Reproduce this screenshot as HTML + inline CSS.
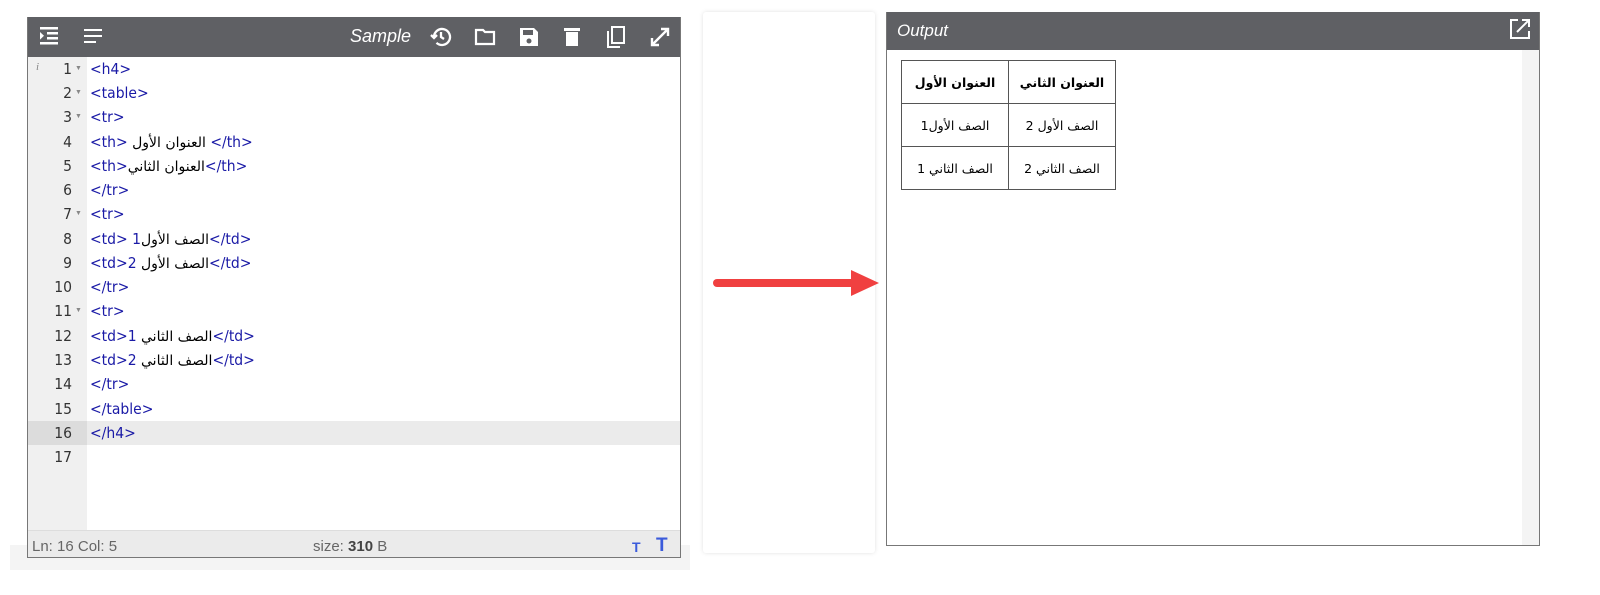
<!DOCTYPE html>
<html><head><meta charset="utf-8"><style>
body{margin:0;width:1600px;height:595px;background:#fff;position:relative;overflow:hidden;font-family:"Liberation Sans","DejaVu Sans",sans-serif}
.ed{position:absolute;left:27px;top:17px;width:652px;height:540px;border:1px solid #777;border-top:none;background:#fff}
.hdr{position:absolute;left:0;top:0;right:0;height:40px;background:#5f6064}
.gut{position:absolute;left:0;top:40px;width:59px;bottom:26px;background:#f0f0f0}
.ln{position:absolute;left:0;width:44px;text-align:right;font-family:"DejaVu Sans Condensed","DejaVu Sans",sans-serif;font-size:15.5px;color:#333;height:24px;line-height:24px}
.cd{position:absolute;left:62px;font-family:"DejaVu Sans Condensed","DejaVu Sans Mono",monospace;font-size:15.5px;color:#1a1aa6;height:24px;line-height:24px;white-space:pre}
.ar{color:#000;font-family:"DejaVu Sans",serif;font-size:14px}
.fold{position:absolute;left:47px;font-size:7px;color:#888}
.stat{position:absolute;left:0;right:0;bottom:0;height:26px;background:#ebebeb;border-top:1px solid #ddd;font-size:15px;color:#666;line-height:32px;overflow:hidden}
.ic{position:absolute;top:8px}
.out{position:absolute;left:886px;top:12px;width:652px;height:533px;border:1px solid #777;border-top:none;background:#fff}
table{position:absolute;left:14px;top:48px;border-collapse:collapse;font-family:"DejaVu Sans",serif;font-size:12.5px}
td,th{border:1px solid #555;height:42px;padding:0 8px;text-align:center;white-space:nowrap;direction:rtl}
th,td{width:90px}
</style></head><body>
<div style="position:absolute;left:10px;top:545px;width:680px;height:25px;background:#f4f4f4"></div>
<div class="ed">
 <div class="hdr">
  <svg class="ic" style="left:10px" width="22" height="22" viewBox="0 0 22 22" fill="#fff"><rect x="2" y="2" width="18" height="2.5"/><rect x="9" y="7" width="11" height="2.5"/><rect x="9" y="12" width="11" height="2.5"/><rect x="2" y="17" width="18" height="2.5"/><path d="M2 7l4 3.8-4 3.8z"/></svg>
  <svg class="ic" style="left:54px" width="22" height="22" viewBox="0 0 22 22" fill="#fff"><rect x="2" y="4" width="18" height="2"/><rect x="2" y="10" width="18" height="2"/><rect x="2" y="16" width="12" height="2"/></svg>
  <div style="position:absolute;left:322px;top:9px;color:#fff;font-style:italic;font-size:18px">Sample</div>
  <svg class="ic" style="left:401px" width="24" height="24" viewBox="0 0 24 24" fill="none" stroke="#fff" stroke-width="2.3"><path d="M5 12a8 8 0 1 1 2.5 5.8"/><path d="M12 7v5l3 2"/><path d="M2 10l3 3 3-3" /></svg>
  <svg class="ic" style="left:445px" width="24" height="24" viewBox="0 0 24 24" fill="none" stroke="#fff" stroke-width="2.2"><path d="M3 5h7l2 2h9v12H3z"/></svg>
  <svg class="ic" style="left:489px" width="24" height="24" viewBox="0 0 24 24" fill="#fff"><path d="M3 3h14l4 4v14H3z"/><rect x="6" y="5" width="10" height="5" fill="#5f6064"/><circle cx="12" cy="16" r="2.5" fill="#5f6064"/></svg>
  <svg class="ic" style="left:532px" width="24" height="24" viewBox="0 0 24 24" fill="#fff"><rect x="4" y="3" width="16" height="3"/><path d="M6 7h12v14H6z"/></svg>
  <svg class="ic" style="left:576px" width="24" height="24" viewBox="0 0 24 24" fill="none" stroke="#fff" stroke-width="2"><rect x="8" y="2" width="12" height="16"/><path d="M4 6v16h12"/></svg>
  <svg class="ic" style="left:620px" width="24" height="24" viewBox="0 0 24 24" fill="none" stroke="#fff" stroke-width="2.4"><path d="M4 20L20 4M13 4h7v7M4 13v7h7"/></svg>
 </div>
 <div class="gut"></div>
 <div style="position:absolute;left:0;right:0;top:404px;height:24px;background:#ebebeb"></div>
 <div style="position:absolute;left:0;top:404px;width:59px;height:24px;background:#dcdcdc"></div>
 <div style="position:absolute;left:8px;top:44px;font-size:11px;color:#888;font-style:italic;font-family:'Liberation Serif',serif">i</div>
 <div class="stat"><span style="position:absolute;left:4px">Ln: 16 Col: 5</span><span style="position:absolute;left:285px">size: <b style="color:#444">310</b> B</span><span style="position:absolute;left:604px;color:#3b5bdb;font-weight:bold;font-size:14px">T</span><span style="position:absolute;left:628px;color:#3b5bdb;font-weight:bold;font-size:19px;line-height:30px">T</span></div>
 <div class="ln" style="top:40px">1</div><div class="fold" style="top:48px">▼</div><div class="cd" style="top:40px">&lt;h4&gt;</div>
 <div class="ln" style="top:64px">2</div><div class="fold" style="top:72px">▼</div><div class="cd" style="top:64px">&lt;table&gt;</div>
 <div class="ln" style="top:88px">3</div><div class="fold" style="top:96px">▼</div><div class="cd" style="top:88px">&lt;tr&gt;</div>
 <div class="ln" style="top:113px">4</div><div class="cd" style="top:113px">&lt;th&gt; <span class="ar">العنوان الأول</span> &lt;/th&gt;</div>
 <div class="ln" style="top:137px">5</div><div class="cd" style="top:137px">&lt;th&gt;<span class="ar">العنوان الثاني</span>&lt;/th&gt;</div>
 <div class="ln" style="top:161px">6</div><div class="cd" style="top:161px">&lt;/tr&gt;</div>
 <div class="ln" style="top:185px">7</div><div class="fold" style="top:193px">▼</div><div class="cd" style="top:185px">&lt;tr&gt;</div>
 <div class="ln" style="top:210px">8</div><div class="cd" style="top:210px">&lt;td&gt; 1<span class="ar">الصف الأول</span>&lt;/td&gt;</div>
 <div class="ln" style="top:234px">9</div><div class="cd" style="top:234px">&lt;td&gt;2 <span class="ar">الصف الأول</span>&lt;/td&gt;</div>
 <div class="ln" style="top:258px">10</div><div class="cd" style="top:258px">&lt;/tr&gt;</div>
 <div class="ln" style="top:282px">11</div><div class="fold" style="top:290px">▼</div><div class="cd" style="top:282px">&lt;tr&gt;</div>
 <div class="ln" style="top:307px">12</div><div class="cd" style="top:307px">&lt;td&gt;1 <span class="ar">الصف الثاني</span>&lt;/td&gt;</div>
 <div class="ln" style="top:331px">13</div><div class="cd" style="top:331px">&lt;td&gt;2 <span class="ar">الصف الثاني</span>&lt;/td&gt;</div>
 <div class="ln" style="top:355px">14</div><div class="cd" style="top:355px">&lt;/tr&gt;</div>
 <div class="ln" style="top:380px">15</div><div class="cd" style="top:380px">&lt;/table&gt;</div>
 <div class="ln" style="top:404px">16</div><div class="cd" style="top:404px">&lt;/h4&gt;</div>
 <div class="ln" style="top:428px">17</div>
</div>
<div style="position:absolute;left:703px;top:12px;width:172px;height:541px;background:#fff;box-shadow:0 0 4px rgba(0,0,0,.12);border-radius:3px"></div>
<svg style="position:absolute;left:705px;top:262px" width="180" height="40"><line x1="12" y1="21" x2="150" y2="21" stroke="#f04040" stroke-width="8" stroke-linecap="round"/><path d="M146 8L174 21L146 34z" fill="#f04040"/></svg>
<div class="out">
 <div class="hdr" style="height:38px"><div style="position:absolute;left:10px;top:9px;color:#fff;font-style:italic;font-size:17px">Output</div>
 <svg style="position:absolute;left:622px;top:6px" width="22" height="22" viewBox="0 0 22 22" fill="none" stroke="#fff" stroke-width="2"><path d="M9 2H2v18h18v-7"/><path d="M8 14L20 2M13 2h7v7"/></svg></div>
 <div style="position:absolute;right:0;top:38px;width:17px;bottom:0;background:#f4f4f4"></div>
 <table><tr><th>العنوان الأول</th><th>العنوان الثاني</th></tr>
 <tr><td>الصف الأول1</td><td>الصف الأول 2</td></tr>
 <tr><td>الصف الثاني 1</td><td>الصف الثاني 2</td></tr></table>
</div>
</body></html>
